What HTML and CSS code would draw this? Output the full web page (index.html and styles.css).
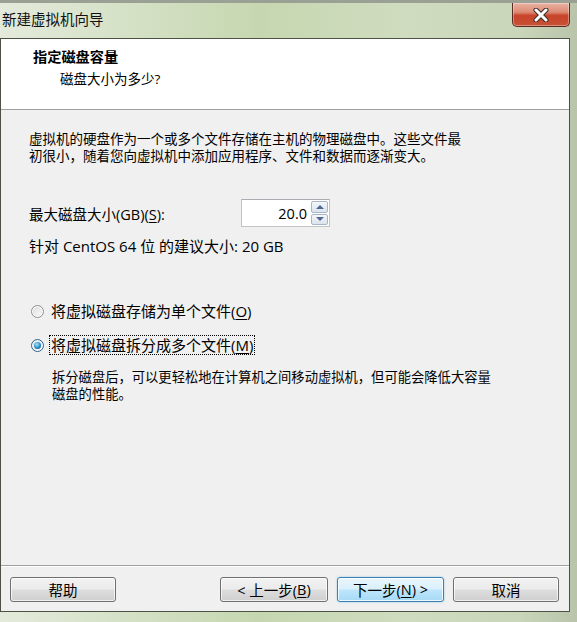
FILE: index.html
```html
<!doctype html>
<html>
<head>
<meta charset="utf-8">
<title>新建虚拟机向导</title>
<link rel="stylesheet" href="styles.css">
</head>
<body>
<div class="win">
	<div class="title-bar">
		<span class="title-txt">新建虚拟机向导</span>
		<div class="close-btn">
			<svg width="22" height="14" viewBox="0 0 22 14">
				<path d="M6 2 L16 12 M16 2 L6 12" stroke="#3a2a28" stroke-width="5" stroke-linecap="round"/>
				<path d="M6 2 L16 12 M16 2 L6 12" stroke="#fff" stroke-width="3" stroke-linecap="round"/>
			</svg>
		</div>
	</div>
	<div class="client">
		<div class="head">
			<h1>指定磁盘容量</h1>
			<p>磁盘大小为多少?</p>
		</div>
		<div class="main">
			<p class="intro">虚拟机的硬盘作为一个或多个文件存储在主机的物理磁盘中。这些文件最<br>初很小，随着您向虚拟机中添加应用程序、文件和数据而逐渐变大。</p>
			<div class="size-row">
				<span class="lbl">最大磁盘大小(GB)(<u>S</u>):</span>
				<div class="spin">
					<span class="spin-val">20.0</span>
					<div class="spin-btns">
						<span class="spin-up"><i></i></span>
						<span class="spin-dn"><i></i></span>
					</div>
				</div>
			</div>
			<p class="advice">针对 CentOS 64 位 的建议大小: 20 GB</p>
			<div class="radio-row first">
				<span class="radio"></span>
				<span class="radio-txt">将虚拟磁盘存储为单个文件(<u>O</u>)</span>
			</div>
			<div class="radio-row">
				<span class="radio on"><i></i></span>
				<span class="radio-txt focus">将虚拟磁盘拆分成多个文件(<u>M</u>)</span>
			</div>
			<p class="desc">拆分磁盘后，可以更轻松地在计算机之间移动虚拟机，但可能会降低大容量<br>磁盘的性能。</p>
		</div>
		<div class="foot">
			<span class="btn help">帮助</span>
			<span class="btn prev">&lt; 上一步(<u>B</u>)</span>
			<span class="btn next">下一步(<u>N</u>) &gt;</span>
			<span class="btn cancel">取消</span>
		</div>
	</div>
</div>
</body>
</html>
```

FILE: styles.css
```css
body,h1,p{ margin:0; padding:0;}
body{ width:577px; height:622px; overflow:hidden; font-family:"Open Sans","Noto Sans CJK SC",sans-serif; font-size:13.5px; color:#000;}
u{ text-decoration:underline; text-underline-offset:2px;}

.win{ width:577px; height:622px; background:linear-gradient(90deg,#e4eadb 0%,#d6e2c8 20%,#c6d7b0 45%,#cfdcbf 70%,#c9d6b9 90%,#b9c4ab 100%); display:flex; flex-direction:column;}
.title-bar{ height:38px; position:relative; border-top:3px solid #9aa194; box-sizing:border-box;}
.title-txt{ display:block; padding-left:2px; line-height:34px; font-size:14.5px; color:#111;}
.close-btn{ position:absolute; left:512px; top:0; width:56px; height:23px; border:1px solid #5a2b22; border-top:none; border-radius:0 0 5px 5px; background:linear-gradient(#e9b3a4 0%,#dc8a72 40%,#c8432a 55%,#c65236 100%); display:flex; align-items:center; justify-content:center; box-shadow:inset 0 0 0 1px rgba(255,255,255,0.35);}
.close-btn svg{ display:block;}

.client{ width:568px; flex:1; border:1px solid #4b5145; background:#f0f0f0; display:flex; flex-direction:column; margin-bottom:10px;}
.head{ height:71px; background:#fff; border-bottom:1px solid #a0a0a0; box-sizing:border-box;}
.head h1{ font-size:14.2px; font-weight:bold; line-height:18px; padding:9px 0 0 32px;}
.head p{ font-size:13.5px; line-height:18px; padding:4px 0 0 59px;}

.main{ flex:1; padding:21px 0 0 28px;}
.intro{ line-height:17px;}
.size-row{ display:flex; align-items:center; height:28px; margin-top:34px;}
.lbl{ width:212px; font-size:14.5px;}
.spin{ width:87px; height:26px; border:1px solid #c2c4c8; border-top-color:#abadb3; background:#fff; display:flex; align-items:center;}
.spin-val{ flex:1; text-align:right; padding-right:4px; font-size:14.5px;}
.spin-btns{ width:17px; height:24px; margin-right:1px; display:flex; flex-direction:column; gap:1px;}
.spin-btns span{ flex:1; border:1px solid #a9b5c8; border-radius:2px; background:linear-gradient(#f4f7fb,#dbe3ee); display:flex; align-items:center; justify-content:center;}
.spin-up i{ border:4px solid transparent; border-bottom:4px solid #4f6690; border-top:none;}
.spin-dn i{ border:4px solid transparent; border-top:4px solid #4f6690; border-bottom:none;}
.advice{ line-height:18px; margin-top:10px; font-size:15px;}

.radio-row{ display:flex; align-items:center; height:20px; margin-top:14px;}
.radio-row.first{ margin-top:46px;}
.radio{ width:11px; height:11px; border:1px solid #8e8f8f; border-radius:50%; background:radial-gradient(circle at 60% 65%,#f4f4f4,#d8d8d8); margin:0 6px 0 2px; display:flex; align-items:center; justify-content:center; box-shadow:inset 0 0 0 1px #fff;}
.radio.on{ border-color:#2c628b;}
.radio.on i{ width:7px; height:7px; border-radius:50%; background:radial-gradient(circle at 40% 35%,#a8e3fb 0%,#2a8cc6 55%,#10466f 100%);}
.radio-txt{ line-height:18px; padding:0 1px; font-size:15px;}
.radio-txt.focus{ outline:1px dotted #000; outline-offset:0;}
.desc{ line-height:17px; margin:14px 0 0 23px; font-size:13.3px;}

.foot{ height:46px; border-top:1px solid #a0a0a0; box-shadow:inset 0 1px 0 #fff; display:flex; align-items:flex-start; padding:11px 0 0 9px; box-sizing:border-box;}
.btn{ height:25px; box-sizing:border-box; border:1px solid #707070; border-radius:3px; background:linear-gradient(#f2f2f2 0%,#ebebeb 48%,#dddddd 52%,#cfcfcf 100%); box-shadow:inset 0 0 0 1px rgba(255,255,255,0.7); display:flex; align-items:center; justify-content:center; font-size:14.5px;}
.help{ width:106px;}
.prev{ width:108px; margin-left:104px;}
.next{ width:107px; margin-left:9px; border-color:#3c7fb1; background:linear-gradient(#eaf6fd 0%,#d9f0fc 48%,#bee6fd 52%,#a7d9f5 100%); box-shadow:inset 0 0 0 1px rgba(255,255,255,0.8),0 0 2px #7fc9f0;}
.cancel{ width:106px; margin-left:9px;}
```
